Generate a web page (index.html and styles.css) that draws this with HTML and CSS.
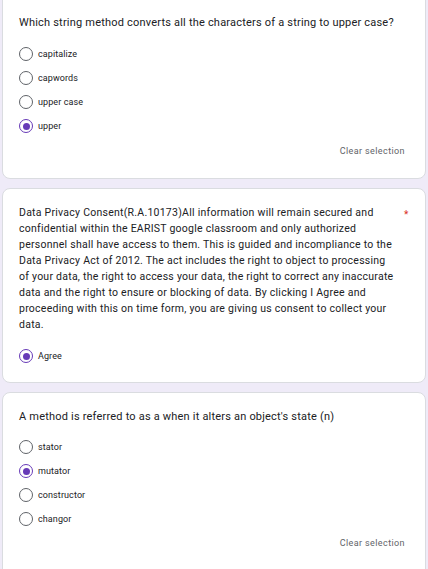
FILE: index.html
```html
<!DOCTYPE html>
<html>
<head>
<meta charset="utf-8">
<link rel="stylesheet" href="styles.css">
</head>
<body>
<div class="page">
  <div class="card card-first">
    <div class="question">Which string method converts all the characters of a string to upper case?</div>
    <div class="options">
      <div class="option"><span class="radio"></span><span class="label">capitalize</span></div>
      <div class="option"><span class="radio"></span><span class="label">capwords</span></div>
      <div class="option"><span class="radio"></span><span class="label">upper case</span></div>
      <div class="option"><span class="radio checked"></span><span class="label">upper</span></div>
    </div>
    <div class="clear-row"><span class="clear">Clear selection</span></div>
  </div>

  <div class="card card-consent">
    <div class="consent-head">
      <div class="consent">Data Privacy Consent(R.A.10173)All information will remain secured and confidential within the EARIST google classroom and only authorized personnel shall have access to them. This is guided and incompliance to the Data Privacy Act of 2012. The act includes the right to object to processing of your data, the right to access your data, the right to correct any inaccurate data and the right to ensure or blocking of data. By clicking I Agree and proceeding with this on time form, you are giving us consent to collect your data.</div>
      <span class="required">*</span>
    </div>
    <div class="options">
      <div class="option"><span class="radio checked"></span><span class="label">Agree</span></div>
    </div>
  </div>

  <div class="card card-last">
    <div class="question">A method is referred to as a when it alters an object's state (n)</div>
    <div class="options">
      <div class="option"><span class="radio"></span><span class="label">stator</span></div>
      <div class="option"><span class="radio checked"></span><span class="label">mutator</span></div>
      <div class="option"><span class="radio"></span><span class="label">constructor</span></div>
      <div class="option"><span class="radio"></span><span class="label">changor</span></div>
    </div>
    <div class="clear-row"><span class="clear">Clear selection</span></div>
  </div>
</div>
</body>
</html>
```
FILE: styles.css
```css
html, body {
  margin: 0;
  padding: 0;
}
body {
  background: #efebf8;
  font-family: Roboto, "Liberation Sans", sans-serif;
  color: #202124;
  width: 428px;
  height: 569px;
  overflow: hidden;
}
.page {
  display: flex;
  flex-direction: column;
  gap: 9px;
  padding: 0 2px;
  margin-top: -8px;
}
.card {
  background: #fff;
  border: 1px solid #dadce0;
  border-radius: 8px;
  padding: 0 16px;
}
.card-first {
  height: 187px;
  padding-top: 23px;
  box-sizing: border-box;
}
.question {
  font-size: 11px;
  line-height: 14px;
  letter-spacing: 0.2px;
}
.options {
  display: flex;
  flex-direction: column;
  gap: 10px;
  margin-top: 16px;
}
.card-first .options {
  margin-top: 17px;
}
.option {
  display: flex;
  align-items: center;
  gap: 5px;
  height: 14px;
}
.radio {
  width: 14px;
  height: 14px;
  box-sizing: border-box;
  border: 1.5px solid #5f6368;
  border-radius: 50%;
  flex: none;
  display: flex;
  align-items: center;
  justify-content: center;
}
.radio.checked {
  border-color: #673ab7;
}
.radio.checked::after {
  content: "";
  width: 7px;
  height: 7px;
  border-radius: 50%;
  background: #673ab7;
}
.label {
  font-size: 9px;
  letter-spacing: 0.1px;
  color: #202124;
}
.clear-row {
  display: flex;
  justify-content: flex-end;
  margin-top: 12px;
  padding-right: 4px;
}
.card-first .clear-row {
  margin-top: 13px;
}
.clear {
  font-size: 9px;
  letter-spacing: 0.4px;
  color: #5f6368;
}
.card-consent {
  height: 195px;
  box-sizing: border-box;
  padding-top: 16px;
}
.consent-head {
  display: flex;
  align-items: flex-start;
  justify-content: space-between;
}
.consent {
  font-size: 10.5px;
  line-height: 16px;
  letter-spacing: 0.25px;
  width: 378px;
  flex: none;
}
.required {
  color: #d93025;
  font-size: 10px;
  line-height: 16px;
  width: 5px;
  margin-top: 2px;
}
.card-consent .options {
  margin-top: 16px;
}
.card-last {
  height: 200px;
  box-sizing: border-box;
  padding-top: 17px;
}
```
